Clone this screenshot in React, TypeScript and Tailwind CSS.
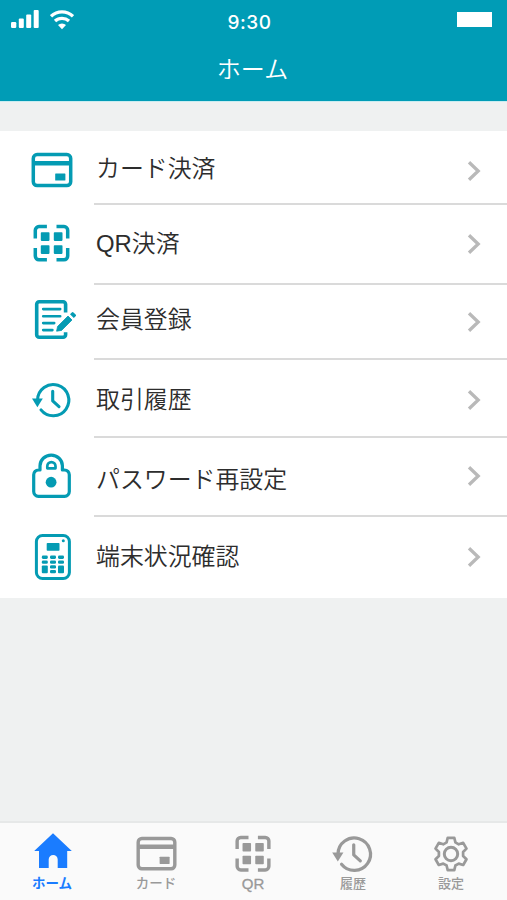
import type { ReactNode } from 'react';

const iconBox = 'h-12 w-12 shrink-0';

function CardIcon({ className = iconBox }: { className?: string }) {
  return (
    <svg className={className} viewBox="0 0 48 48" fill="none" stroke="currentColor" strokeWidth="3.5">
      <rect x="5.3" y="8.6" width="37.4" height="31" rx="3.8" />
      <path d="M5 17.2h38" strokeWidth="4.6" />
      <rect x="27.2" y="27.4" width="10.2" height="7.2" rx=".5" fill="currentColor" stroke="none" />
    </svg>
  );
}

function QrIcon({ className = iconBox }: { className?: string }) {
  return (
    <svg className={className} viewBox="0 0 48 48" fill="none" stroke="currentColor" strokeWidth="3.5" strokeLinecap="butt">
      <path d="M18.9 7.6H11a3.7 3.7 0 0 0-3.7 3.7v8.1M28.5 7.6H36a3.7 3.7 0 0 1 3.7 3.7v8.1M18.9 40.8H11a3.7 3.7 0 0 1-3.7-3.7V29M28.5 40.8H36a3.7 3.7 0 0 0 3.7-3.7V29" />
      <g fill="currentColor" stroke="none">
        <rect x="12.8" y="13.2" width="8.7" height="8.7" rx=".8" />
        <rect x="25.8" y="13.2" width="8.7" height="8.7" rx=".8" />
        <rect x="12.8" y="26.2" width="8.7" height="8.7" rx=".8" />
        <rect x="25.8" y="26.2" width="8.7" height="8.7" rx=".8" />
      </g>
    </svg>
  );
}

function FormIcon() {
  return (
    <svg className={iconBox} viewBox="0 0 48 48" fill="none" stroke="currentColor" strokeWidth="3.6">
      <path d="M37.6 16.5V8.2a2.5 2.5 0 0 0-2.5-2.5H11.2a2.5 2.5 0 0 0-2.5 2.5v30.6a2.5 2.5 0 0 0 2.5 2.5h23.9a2.5 2.5 0 0 0 2.5-2.5v-2.6" />
      <path d="M15.2 13.1h17M15.2 20.3h17M15.2 27.1h11M15.2 34.1h9.2" strokeWidth="2.6" strokeLinecap="round" />
      <path d="M28.6 35.2l1-4.8L40 20l4 4-10.4 10.4z" fill="currentColor" stroke="currentColor" strokeWidth=".8" strokeLinejoin="round" />
      <path d="M42 18.2l1.8-1.7a1.2 1.2 0 0 1 1.7 0l2.1 2.1a1.2 1.2 0 0 1 0 1.7L45.8 22z" fill="currentColor" stroke="none" />
    </svg>
  );
}

function HistoryIcon({ className = iconBox }: { className?: string }) {
  return (
    <svg className={className} viewBox="0 0 48 48" fill="none" stroke="currentColor" strokeWidth="3.1">
      <path d="M9.6 24A15.6 15.6 0 1 1 13 33.9" strokeLinecap="round" />
      <path d="M4 22.6h10.8L9.4 31.2z" fill="currentColor" stroke="none" />
      <path d="M24.7 15.2v9.6l6.3 5.8" strokeLinecap="round" strokeLinejoin="round" />
    </svg>
  );
}

function LockIcon() {
  return (
    <svg className={iconBox} viewBox="0 0 48 48" fill="none" stroke="currentColor" strokeWidth="3.2">
      <path d="M12 18v-4.2a11.2 10.7 0 0 1 22.4 0V18h2.2a4.7 4.7 0 0 1 4.7 4.7v16.9a4.7 4.7 0 0 1-4.7 4.7H10.4a4.7 4.7 0 0 1-4.7-4.7V22.7a4.7 4.7 0 0 1 4.7-4.7z" strokeLinejoin="round" />
      <path d="M19.3 16.3v-2.1a4.1 4.1 0 0 1 8.2 0v2.1z" strokeWidth="2.7" strokeLinejoin="round" />
      <circle cx="23.1" cy="30.2" r="5.4" fill="currentColor" stroke="none" />
    </svg>
  );
}

function TerminalIcon() {
  return (
    <svg className={iconBox} viewBox="0 0 48 48" fill="none" stroke="currentColor" strokeWidth="3">
      <rect x="8.4" y="2.4" width="33" height="43.2" rx="6.2" />
      <g fill="currentColor" stroke="none">
        <rect x="18.7" y="10" width="12.8" height="7.8" rx=".8" />
        <circle cx="35.3" cy="7.8" r="1.5" />
        <rect x="13.8" y="22.6" width="6" height="3.3" rx="1.3" />
        <rect x="22" y="22.6" width="6" height="3.3" rx="1.3" />
        <rect x="30" y="22.6" width="6" height="3.3" rx="1.3" />
        <rect x="13.8" y="27.4" width="6" height="3.3" rx="1.3" />
        <rect x="22" y="27.4" width="6" height="3.3" rx="1.3" />
        <rect x="30" y="27.4" width="6" height="3.3" rx="1.3" />
        <rect x="22" y="32.3" width="6" height="3.3" rx="1.3" />
        <rect x="22" y="37" width="6" height="3.3" rx="1.3" />
        <rect x="13.8" y="32.4" width="6" height="7.8" rx="1" />
        <rect x="30" y="32.4" width="6" height="7.8" rx="1" />
      </g>
    </svg>
  );
}

function HomeIcon() {
  return (
    <svg className="mb-1.5 ml-0.5 h-9 w-[38px]" viewBox="0 0 38 36" fill="currentColor">
      <path d="M19 .3L37.8 18h-4.6v17H23.7V26.4a4.5 4.5 0 0 0-9 0V35H5V18H.2z" />
    </svg>
  );
}

function GearIcon() {
  return (
    <svg className="h-9 w-9" viewBox="0 0 36 36" fill="none" stroke="currentColor" strokeWidth="2.7" strokeLinejoin="round">
      <path d="M14.7 1.8h6.6l1.1 4.6 3.3 1.9 4.5-1.4 3.3 5.7-3.4 3.4v4l3.4 3.3-3.3 5.7-4.5-1.4-3.3 1.9-1.1 4.6h-6.6l-1.1-4.6-3.3-1.9L5.8 29l-3.3-5.7L5.9 20v-4l-3.4-3.4 3.3-5.7 4.5 1.4 3.3-1.9z" />
      <circle cx="18" cy="18" r="6.7" strokeWidth="3" />
    </svg>
  );
}

function Chevron({ className }: { className: string }) {
  return (
    <svg className={`ml-auto mr-[25px] h-6 w-4 shrink-0 ${className}`} viewBox="0 0 16 24" fill="none" stroke="#b9b9b9" strokeWidth="3.3">
      <path d="M3 3.2L12.2 12 3 20.8" />
    </svg>
  );
}

type Row = { label: string; icon: ReactNode; row: string; iconPos: string; textPos: string; arrowPos: string };

const rows: Row[] = [
  { label: 'カード決済', icon: <CardIcon />, row: 'h-[74px]', iconPos: 'mt-[15px]', textPos: 'mt-5', arrowPos: 'mt-7' },
  { label: 'QR決済', icon: <QrIcon />, row: 'h-20', iconPos: 'mt-3.5', textPos: 'mt-[21px]', arrowPos: 'mt-[27px]' },
  { label: '会員登録', icon: <FormIcon />, row: 'h-[75px]', iconPos: 'mt-[11px]', textPos: 'mt-[17px]', arrowPos: 'mt-[25px]' },
  { label: '取引履歴', icon: <HistoryIcon />, row: 'h-[78px]', iconPos: 'mt-4', textPos: 'mt-[22px]', arrowPos: 'mt-7' },
  { label: 'パスワード再設定', icon: <LockIcon />, row: 'h-[79px]', iconPos: 'mt-3.5', textPos: 'mt-6', arrowPos: 'mt-[26px]' },
  { label: '端末状況確認', icon: <TerminalIcon />, row: 'h-[81px]', iconPos: 'mt-4', textPos: 'mt-[22px]', arrowPos: 'mt-7' },
];

const tabs = [
  { label: 'ホーム', icon: <HomeIcon />, style: 'text-[#1a7cff]', text: 'text-[13.5px] font-bold' },
  { label: 'カード', icon: <CardIcon className="h-[47px] w-[47px]" />, style: 'text-[#999]', text: 'text-[13.5px] font-medium' },
  { label: 'QR', icon: <QrIcon className="h-[47px] w-[47px]" />, style: 'text-[#999]', text: 'text-[15px] [-webkit-text-stroke:0.3px]' },
  { label: '履歴', icon: <HistoryIcon className="h-[50px] w-[50px]" />, style: 'text-[#999]', text: 'text-[13px] font-medium' },
  { label: '設定', icon: <GearIcon />, style: 'text-[#999]', text: 'text-[13px] font-medium' },
];

export default function App() {
  return (
    <div className="flex h-[900px] w-[507px] flex-col overflow-hidden bg-[#eff1f1] font-['Liberation_Sans','Noto_Sans_CJK_JP',sans-serif]">
      <header className="h-[102px] shrink-0 border-b border-[#c9edf1] bg-[#009cb6] text-white">
        <div className="grid h-10 grid-cols-3 items-start">
          <div className="flex gap-[11px] pl-[11px] pt-[10px]">
            <svg className="h-[19px] w-7" viewBox="0 0 28 19" fill="currentColor">
              <rect x="0" y="12" width="5.3" height="6" rx="1.2" />
              <rect x="7.8" y="8.5" width="5" height="9.5" rx="1" />
              <rect x="15.2" y="4.5" width="5" height="13.5" rx="1" />
              <rect x="22.7" y="0" width="5" height="18" rx="1" />
            </svg>
            <svg className="h-5 w-6" viewBox="0 0 24 20" fill="none" stroke="currentColor" strokeWidth="3.3">
              <path d="M1 6.3a16 16 0 0 1 22 0M5 11a10.4 10.4 0 0 1 14 0" />
              <path d="M12 19.2l-4-4.1a5.8 5.8 0 0 1 8 0z" fill="currentColor" stroke="none" />
            </svg>
          </div>
          <div className="pr-2 pt-[13px] text-center font-['Inter','Noto_Sans',sans-serif] text-[19px] font-medium leading-5 tracking-[0.5px]">
            9:30
          </div>
          <div className="ml-auto mr-[15px] mt-3 h-[15px] w-[35px] bg-white" />
        </div>
        <h1 className="pr-[2px] pt-[10px] text-center font-['Noto_Sans_CJK_JP',sans-serif] text-2xl font-[350] leading-9">ホーム</h1>
      </header>

      <main className="mt-[29px] bg-white">
        {rows.map((r, i) => (
          <div key={r.label} className={`flex pl-7 ${r.row}`}>
            <div className={`w-[66px] shrink-0 text-[#049bb3] ${r.iconPos}`}>{r.icon}</div>
            <div className={`flex flex-1 items-start ${i < rows.length - 1 ? 'border-b-2 border-[#dadada]' : ''}`}>
              <span className={`pl-0.5 text-[23.9px] font-[350] leading-9 text-[#2d2d2d] ${r.textPos}`}>{r.label}</span>
              <Chevron className={r.arrowPos} />
            </div>
          </div>
        ))}
      </main>

      <nav className="mt-auto grid h-[79px] shrink-0 grid-cols-[104px_104px_90px_110px_86px] border-t-2 border-[#e6e8e8] bg-[#fafafa]">
        {tabs.map((t) => (
          <div key={t.label} className={`flex flex-col items-center ${t.style}`}>
            <div className="flex h-[51px] items-center pt-2.5">{t.icon}</div>
            <span className={`leading-5 ${t.text}`}>{t.label}</span>
          </div>
        ))}
      </nav>
    </div>
  );
}
